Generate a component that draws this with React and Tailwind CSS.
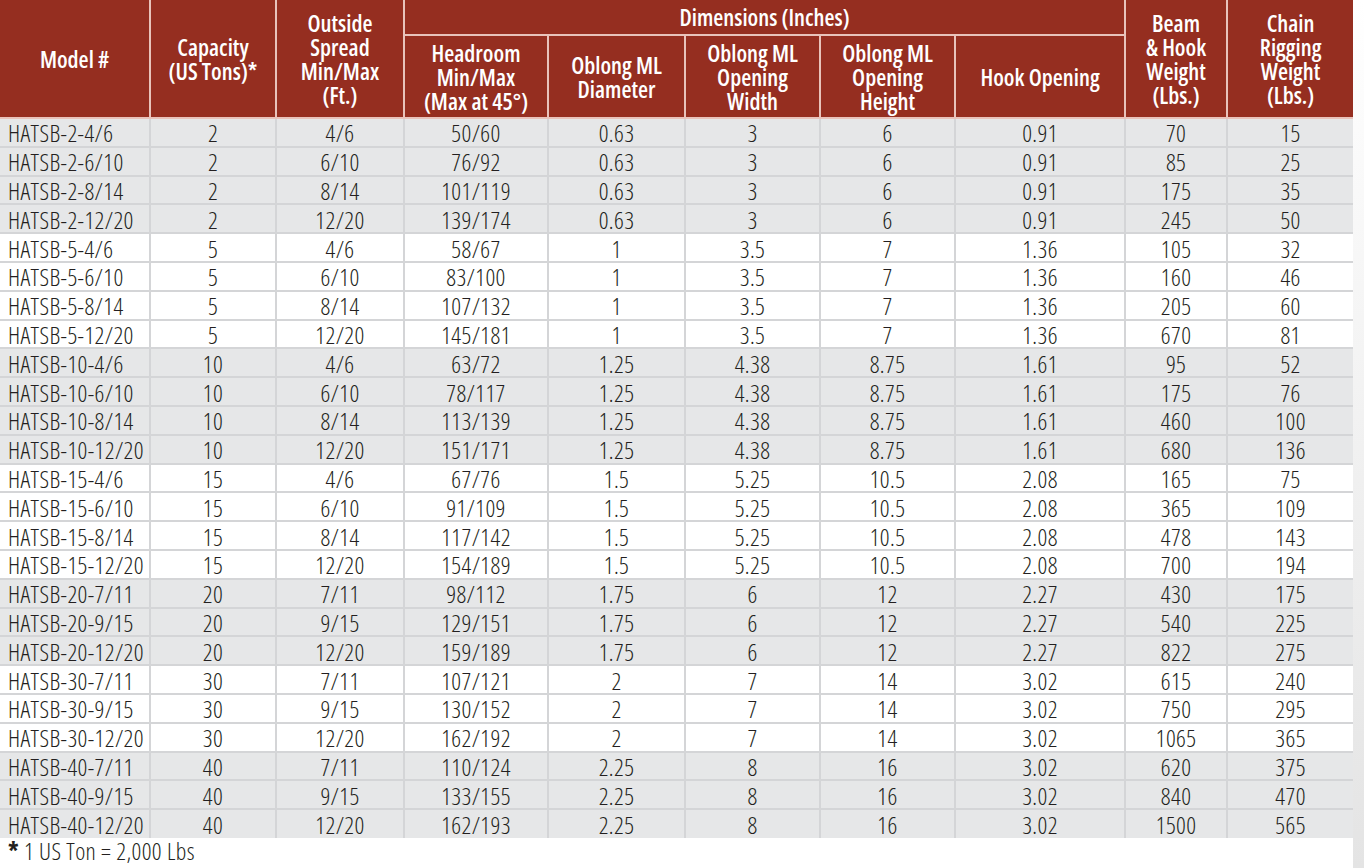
const rows = [
  ['HATSB-2-4/6', '2', '4/6', '50/60', '0.63', '3', '6', '0.91', '70', '15'],
  ['HATSB-2-6/10', '2', '6/10', '76/92', '0.63', '3', '6', '0.91', '85', '25'],
  ['HATSB-2-8/14', '2', '8/14', '101/119', '0.63', '3', '6', '0.91', '175', '35'],
  ['HATSB-2-12/20', '2', '12/20', '139/174', '0.63', '3', '6', '0.91', '245', '50'],
  ['HATSB-5-4/6', '5', '4/6', '58/67', '1', '3.5', '7', '1.36', '105', '32'],
  ['HATSB-5-6/10', '5', '6/10', '83/100', '1', '3.5', '7', '1.36', '160', '46'],
  ['HATSB-5-8/14', '5', '8/14', '107/132', '1', '3.5', '7', '1.36', '205', '60'],
  ['HATSB-5-12/20', '5', '12/20', '145/181', '1', '3.5', '7', '1.36', '670', '81'],
  ['HATSB-10-4/6', '10', '4/6', '63/72', '1.25', '4.38', '8.75', '1.61', '95', '52'],
  ['HATSB-10-6/10', '10', '6/10', '78/117', '1.25', '4.38', '8.75', '1.61', '175', '76'],
  ['HATSB-10-8/14', '10', '8/14', '113/139', '1.25', '4.38', '8.75', '1.61', '460', '100'],
  ['HATSB-10-12/20', '10', '12/20', '151/171', '1.25', '4.38', '8.75', '1.61', '680', '136'],
  ['HATSB-15-4/6', '15', '4/6', '67/76', '1.5', '5.25', '10.5', '2.08', '165', '75'],
  ['HATSB-15-6/10', '15', '6/10', '91/109', '1.5', '5.25', '10.5', '2.08', '365', '109'],
  ['HATSB-15-8/14', '15', '8/14', '117/142', '1.5', '5.25', '10.5', '2.08', '478', '143'],
  ['HATSB-15-12/20', '15', '12/20', '154/189', '1.5', '5.25', '10.5', '2.08', '700', '194'],
  ['HATSB-20-7/11', '20', '7/11', '98/112', '1.75', '6', '12', '2.27', '430', '175'],
  ['HATSB-20-9/15', '20', '9/15', '129/151', '1.75', '6', '12', '2.27', '540', '225'],
  ['HATSB-20-12/20', '20', '12/20', '159/189', '1.75', '6', '12', '2.27', '822', '275'],
  ['HATSB-30-7/11', '30', '7/11', '107/121', '2', '7', '14', '3.02', '615', '240'],
  ['HATSB-30-9/15', '30', '9/15', '130/152', '2', '7', '14', '3.02', '750', '295'],
  ['HATSB-30-12/20', '30', '12/20', '162/192', '2', '7', '14', '3.02', '1065', '365'],
  ['HATSB-40-7/11', '40', '7/11', '110/124', '2.25', '8', '16', '3.02', '620', '375'],
  ['HATSB-40-9/15', '40', '9/15', '133/155', '2.25', '8', '16', '3.02', '840', '470'],
  ['HATSB-40-12/20', '40', '12/20', '162/193', '2.25', '8', '16', '3.02', '1500', '565'],
]

// capacity groups alternate grey / white
const greyGroups = ['2', '10', '20', '40']

const th = 'border-2 border-[#e9c3bb] px-1 font-semibold leading-[24px] text-white'

function SpecTable() {
  return (
    <table className="w-[1353px] table-fixed border-collapse border-hidden">
      <colgroup>
        <col className="w-[150px]" />
        <col className="w-[126px]" />
        <col className="w-[128px]" />
        <col className="w-[144px]" />
        <col className="w-[137px]" />
        <col className="w-[135px]" />
        <col className="w-[135px]" />
        <col className="w-[170px]" />
        <col className="w-[102px]" />
        <col className="w-[126px]" />
      </colgroup>
      <thead className="bg-[#952e20] text-[23px]">
        <tr className="h-[35px]">
          <th rowSpan={2} className={th}>Model #</th>
          <th rowSpan={2} className={th}>Capacity<br />(US Tons)*</th>
          <th rowSpan={2} className={th}>Outside<br />Spread<br />Min/Max<br />(Ft.)</th>
          <th colSpan={5} className={th + ' font-medium'}>Dimensions (Inches)</th>
          <th rowSpan={2} className={th}>Beam<br />&amp; Hook<br />Weight<br />(Lbs.)</th>
          <th rowSpan={2} className={th}>Chain<br />Rigging<br />Weight<br />(Lbs.)</th>
        </tr>
        <tr className="h-[83px]">
          <th className={th}>Headroom<br />Min/Max<br />(Max at 45°)</th>
          <th className={th}>Oblong ML<br />Diameter</th>
          <th className={th}>Oblong ML<br />Opening<br />Width</th>
          <th className={th}>Oblong ML<br />Opening<br />Height</th>
          <th className={th}>Hook Opening</th>
        </tr>
      </thead>
      <tbody className="text-[24px] font-light tracking-[0.4px] text-[#231f20]">
        {rows.map((r) => (
          <tr
            key={r[0]}
            className={'h-[28.8px] ' + (greyGroups.includes(r[1]) ? 'bg-[#e6e7e8]' : 'bg-white')}
          >
            {r.map((v, i) => (
              <td
                key={i}
                className={
                  'whitespace-nowrap border-2 border-[#d4d5d7] pb-0 pt-[2px] leading-[24px] ' +
                  (i === 0 ? 'pl-2 text-left' : 'px-0 text-center')
                }
              >
                {v}
              </td>
            ))}
          </tr>
        ))}
      </tbody>
    </table>
  )
}

export default function App() {
  return (
    <div
      className="flex h-[868px] w-[1364px] overflow-hidden bg-white"
      style={{ fontFamily: '"Open Sans", "Liberation Sans Narrow", sans-serif', fontStretch: '75%' }}
    >
      <div className="flex flex-col">
        <SpecTable />
        <p className="pl-2 text-[24px] font-light leading-[26px] tracking-[0.4px] text-[#231f20]">
          <span className="font-bold">*</span> 1 US Ton = 2,000 Lbs
        </p>
      </div>
      <div className="w-[11px] bg-gradient-to-b from-white to-[#e4e4e4]" />
    </div>
  )
}
